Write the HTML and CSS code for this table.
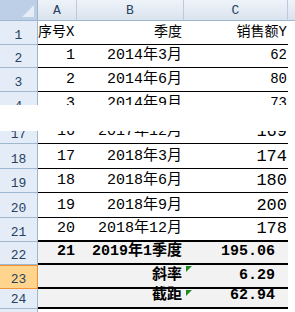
FILE: index.html
```html
<!DOCTYPE html>
<html lang="zh-CN">
<head>
<meta charset="utf-8">
<title>Sheet</title>
<link rel="stylesheet" href="styles.css">
</head>
<body>
<div class="pane top">
  <div class="row hdr">
    <div class="corner"><svg width="37" height="20" viewBox="0 0 37 20"><polygon points="34,5 34,17 22,17" fill="#e6edf6"/></svg></div>
    <div class="ch a">A</div>
    <div class="ch b">B</div>
    <div class="ch c">C</div>
    <div class="ch d"></div>
  </div>
  <div class="row h24">
    <div class="rh">1</div>
    <div class="cell a left t14">序号X</div>
    <div class="cell b t14">季度</div>
    <div class="cell c t14">销售额Y</div>
  </div>
  <div class="row h23">
    <div class="rh">2</div>
    <div class="cell a">1</div>
    <div class="cell b">2014年3月</div>
    <div class="cell c sm">62</div>
  </div>
  <div class="row h24">
    <div class="rh">3</div>
    <div class="cell a">2</div>
    <div class="cell b">2014年6月</div>
    <div class="cell c sm">80</div>
  </div>
  <div class="row h24">
    <div class="rh">4</div>
    <div class="cell a">3</div>
    <div class="cell b">2014年9月</div>
    <div class="cell c sm">73</div>
  </div>
</div>

<div class="pane bottom">
  <div class="row h25 cut">
    <div class="rh">17</div>
    <div class="cell a">16</div>
    <div class="cell b">2017年12月</div>
    <div class="cell c lg">169</div>
  </div>
  <div class="row h25">
    <div class="rh">18</div>
    <div class="cell a">17</div>
    <div class="cell b">2018年3月</div>
    <div class="cell c lg">174</div>
  </div>
  <div class="row h24">
    <div class="rh">19</div>
    <div class="cell a">18</div>
    <div class="cell b">2018年6月</div>
    <div class="cell c lg">180</div>
  </div>
  <div class="row h25">
    <div class="rh">20</div>
    <div class="cell a">19</div>
    <div class="cell b">2018年9月</div>
    <div class="cell c lg">200</div>
  </div>
  <div class="row h24 thick">
    <div class="rh">21</div>
    <div class="cell a">20</div>
    <div class="cell b">2018年12月</div>
    <div class="cell c lg">178</div>
  </div>
  <div class="row h23 thick shade bold">
    <div class="rh">22</div>
    <div class="cell a">21</div>
    <div class="cell b">2019年1季度</div>
    <div class="cell c val">195.06</div>
  </div>
  <div class="row h24 thick shade bold">
    <div class="rh sel">23</div>
    <div class="cell a"></div>
    <div class="cell b">斜率</div>
    <div class="cell c val flag">6.29</div>
  </div>
  <div class="row h20 thick shade bold">
    <div class="rh">24</div>
    <div class="cell a"></div>
    <div class="cell b">截距</div>
    <div class="cell c val flag">62.94</div>
  </div>
  <div class="row h24">
    <div class="rh">25</div>
    <div class="cell a blank"></div>
    <div class="cell b blank"></div>
    <div class="cell c blank"></div>
  </div>
</div>
</body>
</html>
```

FILE: styles.css
```css
html, body {
  margin: 0;
  padding: 0;
  background: #ffffff;
}

body {
  width: 295px;
  font-family: "Liberation Mono", "Noto Sans CJK SC", monospace;
  font-size: 15px;
  color: #000;
}

.pane {
  overflow: hidden;
}

.top {
  height: 105px;
}

.bottom {
  height: 181px;
  margin-top: 26px;
}

.row {
  display: flex;
  box-sizing: border-box;
}

.h20 { height: 20px; }
.h23 { height: 23px; }
.h24 { height: 24px; }
.h25 { height: 25px; }

.cut {
  margin-top: -12px;
}

.hdr {
  height: 21px;
}

.corner {
  width: 38px;
  height: 21px;
  box-sizing: border-box;
  background: #bccfe7;
  border-right: 1px solid #9eb6ce;
  border-bottom: 1px solid #9eb6ce;
}

.corner svg {
  display: block;
}

.ch {
  box-sizing: border-box;
  height: 21px;
  background: linear-gradient(#eef3f9, #dae3ee);
  border-right: 1px solid #bccadb;
  border-bottom: 1px solid #9eb6ce;
  display: flex;
  align-items: center;
  justify-content: center;
  font-size: 13px;
  color: #27415f;
  padding-top: 1px;
}

.ch.d {
  flex: 1;
  border-right: none;
}

.rh {
  width: 38px;
  flex: none;
  box-sizing: border-box;
  background: #e4ecf7;
  border-right: 1px solid #9eb6ce;
  border-bottom: 1px solid #9eb6ce;
  display: flex;
  align-items: flex-end;
  justify-content: center;
  padding-bottom: 2px;
  font-size: 13px;
  line-height: 13px;
  color: #27415f;
}

.rh.sel {
  background: #ffd58d;
  border-right-color: #f29436;
  border-bottom-color: #f29436;
  box-shadow: inset 0 1px 0 #f29436;
}

.a { width: 39px; }
.b { width: 107px; }
.c { width: 104px; }

.cell {
  flex: none;
  box-sizing: border-box;
  border-bottom: 1px solid #000;
  display: flex;
  align-items: flex-end;
  justify-content: flex-end;
  padding: 0 2px 4px 0;
  line-height: 15px;
  white-space: nowrap;
}

.cell.b { padding-right: 2px; }
.cell.c { padding-right: 1px; }

.cell.left {
  justify-content: flex-start;
  padding-left: 0;
}

.t14 {
  font-size: 14px;
}

.sm {
  font-size: 14px;
}

.lg {
  font-size: 17px;
}

.thick .cell {
  border-bottom: 2px solid #000;
}

.shade .cell {
  background: #f2f2f2;
}

.bold .cell {
  font-weight: bold;
}

.cell.val {
  padding-right: 13px;
}

.flag {
  position: relative;
}

.flag::before {
  content: "";
  position: absolute;
  left: 2px;
  top: 1px;
  border-top: 6px solid #1f8a1f;
  border-right: 6px solid transparent;
}

.cell.blank {
  border-bottom: none;
  background: #fff;
}
```
